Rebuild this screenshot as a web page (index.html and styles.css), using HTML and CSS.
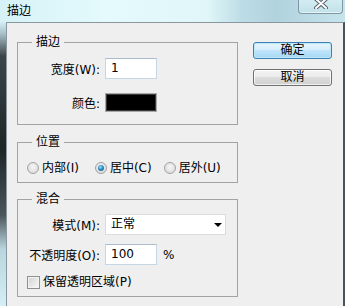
FILE: index.html
```html
<!DOCTYPE html>
<html lang="zh-CN">

<head>
    <meta charset="UTF-8">
    <title>描边</title>
    <link rel="stylesheet" href="styles.css">
</head>

<body>
    <div class="window">
        <div class="titlebar">
            <span class="title">描边</span>
            <div class="close-btn">
                <svg width="14" height="9" viewBox="0 0 14 9">
                    <path d="M2 -1 L12 8 M12 -1 L2 8" stroke="#56606a" stroke-width="4" stroke-linecap="round" />
                    <path d="M2 -1 L12 8 M12 -1 L2 8" stroke="#fff" stroke-width="2" stroke-linecap="round" />
                </svg>
            </div>
        </div>
        <div class="frame">
            <div class="frame-left"></div>
            <div class="client">
                <div class="groups">
                    <fieldset class="group group-stroke">
                        <legend>描边</legend>
                        <div class="row row-width">
                            <label class="lbl">宽度(W):</label>
                            <div class="textbox">1</div>
                        </div>
                        <div class="row row-color">
                            <label class="lbl">颜色:</label>
                            <div class="swatch"></div>
                        </div>
                    </fieldset>

                    <fieldset class="group group-pos">
                        <legend>位置</legend>
                        <div class="radios">
                            <span class="opt"><i class="radio"></i>内部(I)</span>
                            <span class="opt opt-center"><i class="radio checked"></i>居中(C)</span>
                            <span class="opt opt-outside"><i class="radio"></i>居外(U)</span>
                        </div>
                    </fieldset>

                    <fieldset class="group group-blend">
                        <legend>混合</legend>
                        <div class="row row-mode">
                            <label class="lbl">模式(M):</label>
                            <div class="select">正常<span class="arrow"></span></div>
                        </div>
                        <div class="row row-opacity">
                            <label class="lbl">不透明度(O):</label>
                            <div class="textbox">100</div>
                            <span class="unit">%</span>
                        </div>
                        <div class="row row-check">
                            <span class="opt"><i class="checkbox"></i>保留透明区域(P)</span>
                        </div>
                    </fieldset>
                </div>

                <div class="buttons">
                    <div class="btn btn-default">确定</div>
                    <div class="btn">取消</div>
                </div>
            </div>
        </div>
    </div>
</body>

</html>
```

FILE: styles.css
```css
* {
    margin: 0;
    padding: 0;
    box-sizing: border-box;
}

body {
    width: 345px;
    height: 306px;
    overflow: hidden;
    font-family: "DejaVu Sans", "Noto Sans CJK SC", sans-serif;
    font-size: 12px;
    color: #000;
}

.window {
    width: 345px;
    height: 306px;
    display: flex;
    flex-direction: column;
    background: linear-gradient(90deg, #d6f2f7 0, #e4fafc 30%, #e0f6f9 60%, #bddde6 70%, #b1d3de 80%, #c6e4ec 100%);
}

/* title bar */
.titlebar {
    height: 22px;
    display: flex;
    align-items: flex-start;
}

.title {
    margin: 4px 0 0 7px;
    line-height: 14px;
}

.close-btn {
    margin-left: auto;
    margin-right: 2px;
    width: 45px;
    height: 14px;
    border: 1px solid #7e98a4;
    border-top: none;
    border-radius: 0 0 4px 4px;
    background: linear-gradient(#d3ecf2, #c2e1ea);
    box-shadow: inset 0 -1px 0 rgba(255,255,255,.6);
    display: flex;
    justify-content: center;
}

.frame {
    flex: 1;
    display: flex;
}

.frame-left {
    width: 6px;
    background: linear-gradient(#d3eef4 0, #a8c2c9 4%, #3b4548 12%, #1e2527 45%, #4a575b 68%, #b9d6de 80%, #d4eff5 100%);
}

/* client area */
.client {
    flex: 1;
    display: flex;
    align-items: flex-start;
    background: #efefef;
    border-left: 1px solid #8b979e;
    border-top: 1px solid #8b979e;
    border-right: 2px solid #44545a;
    padding: 12px 0 0 10px;
}

.groups {
    width: 221px;
}

.group {
    width: 221px;
    border: 1px solid #a3a3a3;
    padding: 0 8px 0 9px;
}

.group legend {
    margin-left: 5px;
    padding: 0 4px;
    line-height: 14px;
}

.group-stroke {
    padding-bottom: 12px;
}

.group-pos {
    margin-top: 10px;
    padding-bottom: 7px;
}

.group-blend {
    margin-top: 9px;
    padding-bottom: 7px;
}

.row {
    display: flex;
    align-items: center;
}

.lbl {
    width: 73px;
    margin-right: 5px;
    text-align: right;
    white-space: nowrap;
}

.row-width {
    margin-top: 9px;
}

.row-color {
    margin-top: 14px;
}

.row-mode {
    margin-top: 8px;
}

.row-opacity {
    margin-top: 9px;
}

.row-check {
    margin-top: 10px;
}

.textbox {
    width: 52px;
    height: 21px;
    background: #fff;
    border: 1px solid #c6d6e4;
    border-top-color: #aabccd;
    padding-left: 5px;
    line-height: 19px;
}

.swatch {
    width: 52px;
    height: 19px;
    background: #000;
    border: 1px solid #a7a7a7;
    box-shadow: inset 0 0 0 1px #3a3a3a;
}

.select {
    position: relative;
    width: 121px;
    height: 21px;
    background: #fff;
    border: 1px solid #dcdcdc;
    padding-left: 5px;
    line-height: 19px;
}

.select .arrow {
    position: absolute;
    right: 3px;
    top: 8px;
    border-left: 4px solid transparent;
    border-right: 4px solid transparent;
    border-top: 4px solid #000;
}

.unit {
    margin-left: 6px;
}

/* radios + checkbox */
.radios {
    margin-top: 12px;
    display: flex;
    height: 14px;
    align-items: center;
}

.opt {
    display: flex;
    align-items: center;
    white-space: nowrap;
    line-height: 14px;
}

.opt-center {
    margin-left: 16px;
}

.opt-outside {
    margin-left: 12px;
}

.radio {
    width: 12px;
    height: 12px;
    border-radius: 50%;
    border: 1px solid #a2a2a2;
    background: radial-gradient(circle at 50% 40%, #f6f6f6 0, #e2e2e2 60%, #d4d4d4 100%);
    margin-right: 3px;
    position: relative;
}

.radio.checked::after {
    content: "";
    position: absolute;
    left: 2px;
    top: 2px;
    width: 6px;
    height: 6px;
    border-radius: 50%;
    background: radial-gradient(circle at 40% 35%, #9fe1fb 0, #2f8cc8 45%, #124f7e 100%);
}

.checkbox {
    width: 13px;
    height: 13px;
    border: 1px solid #8e8f8f;
    background: linear-gradient(135deg, #d2d2d2 0, #ededed 70%, #f8f8f8 100%);
    box-shadow: inset 0 0 0 1px #f4f4f4;
    margin-right: 3px;
}

/* buttons */
.buttons {
    margin: 7px 0 0 15px;
    display: flex;
    flex-direction: column;
    gap: 10px;
}

.btn {
    width: 79px;
    height: 17px;
    border: 1px solid #707070;
    border-radius: 3px;
    background: linear-gradient(#f4f4f4 0, #ebebeb 45%, #dddddd 50%, #cfcfcf 100%);
    box-shadow: inset 0 0 0 1px rgba(255,255,255,.7);
    text-align: center;
    line-height: 15px;
}

.btn-default {
    border-color: #3c7fb1;
    background: linear-gradient(#e6f5fd 0, #d6eefc 45%, #bfe5fb 50%, #a6d7f4 100%);
    box-shadow: inset 0 0 0 1px #bde8fc;
}
```
